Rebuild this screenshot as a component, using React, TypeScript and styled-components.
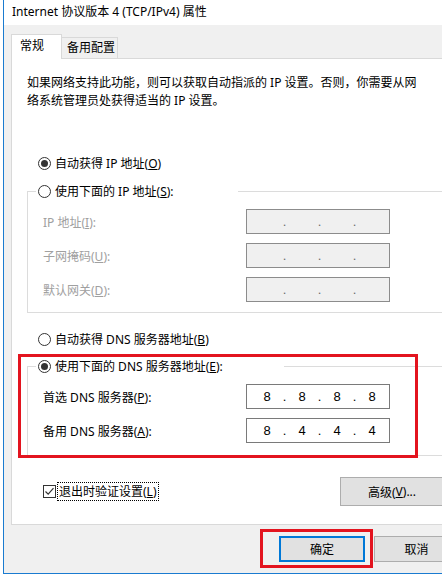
import React from 'react';
import styled, { createGlobalStyle } from 'styled-components';

const GlobalStyle = createGlobalStyle`
  html, body {
    margin: 0;
    padding: 0;
    overflow: hidden;
    background: #fff;
  }
  body {
    font-family: "Noto Sans", "Noto Sans CJK SC", sans-serif;
    font-size: 12px;
    color: #000;
  }
`;

type Addr = string[] | null;

const ipRows: { label: string; key: string; rest: string }[] = [
  { label: 'IP 地址(', key: 'I', rest: '):' },
  { label: '子网掩码(', key: 'U', rest: '):' },
  { label: '默认网关(', key: 'D', rest: '):' },
];

const dnsRows: { label: string; key: string; value: Addr }[] = [
  { label: '首选 DNS 服务器(', key: 'P', value: ['8', '8', '8', '8'] },
  { label: '备用 DNS 服务器(', key: 'A', value: ['8', '4', '4', '4'] },
];

const IpBox = ({ value, disabled }: { value: Addr; disabled?: boolean }) => {
  const parts = value || ['', '', '', ''];
  return (
    <Box $disabled={disabled}>
      {parts.map((p, i) => (
        <React.Fragment key={i}>
          {i > 0 && <Dot>.</Dot>}
          <Octet>{p}</Octet>
        </React.Fragment>
      ))}
    </Box>
  );
};

const App = () => {
  return (
    <>
      <GlobalStyle />
      <Window>
        <TitleBar>Internet 协议版本 4 (TCP/IPv4) 属性</TitleBar>
        <Body>
          <Tabs>
            <Tab $active $width={51}>常规</Tab>
            <Tab $width={56}>备用配置</Tab>
          </Tabs>
          <Panel>
            <Description>
              如果网络支持此功能，则可以获取自动指派的 IP 设置。否则，你需要从网
              <br />
              络系统管理员处获得适当的 IP 设置。
            </Description>

            <RadioRow $top={43}>
              <Radio $checked />
              <span>
                自动获得 IP 地址(<Key>O</Key>)
              </span>
            </RadioRow>

            <Group $top={8} $bottom={10}>
              <Legend $width={202}>
                <Radio />
                <span>
                  使用下面的 IP 地址(<Key>S</Key>):
                </span>
              </Legend>
              <FieldGrid>
                {ipRows.map((r) => (
                  <React.Fragment key={r.key}>
                    <FieldLabel $disabled>
                      {r.label}
                      <Key>{r.key}</Key>
                      {r.rest}
                    </FieldLabel>
                    <IpBox value={null} disabled />
                  </React.Fragment>
                ))}
              </FieldGrid>
            </Group>

            <RadioRow $top={16}>
              <Radio />
              <span>
                自动获得 DNS 服务器地址(<Key>B</Key>)
              </span>
            </RadioRow>

            <Marked $top={7}>
              <Group $top={0} $bottom={12}>
                <Legend $width={248}>
                  <Radio $checked />
                  <span>
                    使用下面的 DNS 服务器地址(<Key>E</Key>):
                  </span>
                </Legend>
                <FieldGrid>
                  {dnsRows.map((r) => (
                    <React.Fragment key={r.key}>
                      <FieldLabel>
                        {r.label}
                        <Key>{r.key}</Key>):
                      </FieldLabel>
                      <IpBox value={r.value} />
                    </React.Fragment>
                  ))}
                </FieldGrid>
              </Group>
              <RedMark $left={-9} $top={-2} $width={400} $height={104} />
            </Marked>

            <ActionsRow>
              <CheckLabel>
                <CheckBox>
                  <svg width="11" height="11" viewBox="0 0 11 11">
                    <polyline
                      points="1.5,5.5 4.2,8.2 9.5,2.2"
                      fill="none"
                      stroke="#333"
                      strokeWidth="1.2"
                    />
                  </svg>
                </CheckBox>
                <FocusText>
                  退出时验证设置(<Key>L</Key>)
                </FocusText>
              </CheckLabel>
              <Button $width={104} $height={29}>
                高级(<Key>V</Key>)...
              </Button>
            </ActionsRow>
          </Panel>

          <Footer>
            <Marked $top={0}>
              <Button $width={86} $height={26} $default>
                确定
              </Button>
              <RedMark $left={-19} $top={-7} $width={113} $height={39} />
            </Marked>
            <Button $width={85} $height={26}>
              取消
            </Button>
          </Footer>
        </Body>
      </Window>
    </>
  );
};

// the dialog is wider than the shot, so it is clipped at the right edge
const Window = styled.div`
  margin-left: 3px;
  width: 438px;
  height: 573px;
  overflow: hidden;
  border-left: 1px solid #1a7bd0;
  border-bottom: 1px solid #1a7bd0;
  background: #f0f0f0;
  display: flex;
  flex-direction: column;
`;

const TitleBar = styled.div`
  flex: 0 0 25px;
  line-height: 24px;
  padding-left: 8px;
  background: #fff;
  font-size: 12px;
  color: #000;
  white-space: nowrap;
`;

const Body = styled.div`
  width: 480px;
  padding: 9px 0 0 7px;
`;

const Tabs = styled.div`
  display: flex;
  align-items: flex-end;
  height: 24px;
`;

const Tab = styled.div<{ $active?: boolean; $width: number }>`
  box-sizing: border-box;
  width: ${(p) => p.$width}px;
  height: ${(p) => (p.$active ? 25 : 21)}px;
  margin-bottom: ${(p) => (p.$active ? -1 : 0)}px;
  padding-left: ${(p) => (p.$active ? 8 : 5)}px;
  line-height: ${(p) => (p.$active ? 22 : 20)}px;
  border: 1px solid #d9d9d9;
  border-bottom: none;
  border-left: ${(p) => (p.$active ? '1px solid #d9d9d9' : 'none')};
  background: ${(p) => (p.$active ? '#fff' : '#f0f0f0')};
  position: relative;
  z-index: ${(p) => (p.$active ? 1 : 0)};
  white-space: nowrap;
`;

const Panel = styled.div`
  box-sizing: border-box;
  width: 452px;
  height: 467px;
  background: #fff;
  border: 1px solid #d9d9d9;
  padding: 15px 0 0 15px;
`;

const Description = styled.p`
  margin: 0;
  line-height: 18px;
  white-space: nowrap;
`;

const Key = styled.u`
  text-decoration: underline;
  text-underline-offset: 1px;
`;

const RadioRow = styled.div<{ $top: number }>`
  display: flex;
  align-items: center;
  gap: 4px;
  height: 20px;
  margin: ${(p) => p.$top}px 0 0 11px;
  white-space: nowrap;
`;

const Radio = styled.span<{ $checked?: boolean }>`
  box-sizing: border-box;
  flex: 0 0 13px;
  width: 13px;
  height: 13px;
  border: 1px solid #333;
  border-radius: 50%;
  background: #fff;
  display: flex;
  align-items: center;
  justify-content: center;

  &::after {
    content: '';
    display: ${(p) => (p.$checked ? 'block' : 'none')};
    width: 7px;
    height: 7px;
    border-radius: 50%;
    background: #333;
  }
`;

const Group = styled.fieldset<{ $top: number; $bottom: number }>`
  margin: ${(p) => p.$top}px 0 0 0;
  padding: 8px 0 ${(p) => p.$bottom}px 15px;
  border: 1px solid #dcdcdc;
  border-right: none;
  min-width: 0;
`;

const Legend = styled.legend<{ $width: number }>`
  box-sizing: border-box;
  width: ${(p) => p.$width}px;
  height: 20px;
  margin-left: -7px;
  padding: 0 0 0 2px;
  display: flex;
  align-items: center;
  gap: 4px;
  background: #fff;
  white-space: nowrap;
`;

const FieldGrid = styled.div`
  display: grid;
  grid-template-columns: 203px 144px;
  grid-auto-rows: 25px;
  row-gap: 9px;
  align-items: center;
`;

const FieldLabel = styled.span<{ $disabled?: boolean }>`
  color: ${(p) => (p.$disabled ? '#a0a0a0' : '#000')};
  white-space: nowrap;
`;

const Box = styled.div<{ $disabled?: boolean }>`
  box-sizing: border-box;
  height: 25px;
  padding-left: 7px;
  border: 1px solid ${(p) => (p.$disabled ? '#8c8c8c' : '#7a7a7a')};
  background: ${(p) => (p.$disabled ? '#f0f0f0' : '#fff')};
  display: flex;
  align-items: center;
  font-family: "Liberation Sans", "DejaVu Sans", sans-serif;
  font-size: 13px;
  color: ${(p) => (p.$disabled ? '#6d6d6d' : '#000')};
`;

const Octet = styled.span`
  width: 26px;
  text-align: center;
`;

const Dot = styled.span`
  width: 9px;
  text-align: center;
`;

const Marked = styled.div<{ $top: number }>`
  position: relative;
  margin-top: ${(p) => p.$top}px;
`;

const RedMark = styled.div<{ $left: number; $top: number; $width: number; $height: number }>`
  position: absolute;
  box-sizing: border-box;
  left: ${(p) => p.$left}px;
  top: ${(p) => p.$top}px;
  width: ${(p) => p.$width}px;
  height: ${(p) => p.$height}px;
  border: 3px solid #e3141f;
  pointer-events: none;
`;

const ActionsRow = styled.div`
  display: flex;
  align-items: center;
  margin-top: 21px;
`;

const CheckLabel = styled.label`
  flex: 0 0 297px;
  margin-left: 16px;
  display: flex;
  align-items: center;
  gap: 2px;
  white-space: nowrap;
`;

const CheckBox = styled.span`
  box-sizing: border-box;
  width: 13px;
  height: 13px;
  border: 1px solid #333;
  background: #fff;
  display: flex;
  align-items: center;
  justify-content: center;
`;

const FocusText = styled.span`
  padding: 0 1px;
  line-height: 17px;
  outline: 1px dotted #000;
`;

const Button = styled.div<{ $width: number; $height: number; $default?: boolean }>`
  box-sizing: border-box;
  width: ${(p) => p.$width}px;
  height: ${(p) => p.$height}px;
  flex: 0 0 auto;
  display: flex;
  align-items: center;
  justify-content: center;
  background: #e1e1e1;
  border: ${(p) => (p.$default ? '2px solid #0078d7' : '1px solid #adadad')};
  white-space: nowrap;
`;

const Footer = styled.div`
  display: flex;
  gap: 9px;
  padding: 11px 0 0 268px;
`;

export default App;
